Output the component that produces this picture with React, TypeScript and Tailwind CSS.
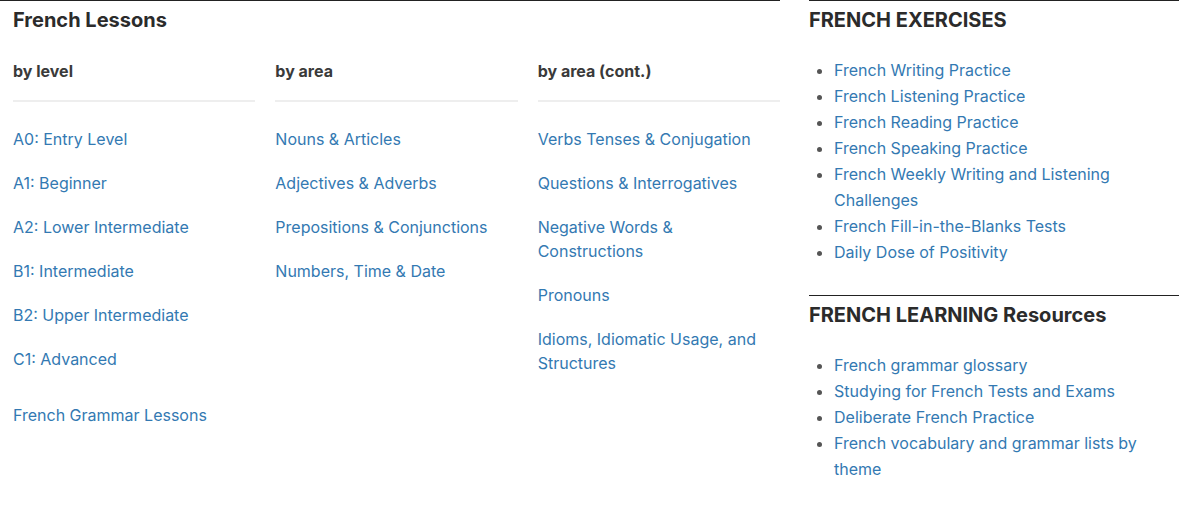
import React from "react";

const levels = [
    "A0: Entry Level",
    "A1: Beginner",
    "A2: Lower Intermediate",
    "B1: Intermediate",
    "B2: Upper Intermediate",
    "C1: Advanced",
];

const areas = [
    "Nouns & Articles",
    "Adjectives & Adverbs",
    "Prepositions & Conjunctions",
    "Numbers, Time & Date",
];

const areasCont = [
    "Verbs Tenses & Conjugation",
    "Questions & Interrogatives",
    "Negative Words & Constructions",
    "Pronouns",
    "Idioms, Idiomatic Usage, and Structures",
];

const exercises = [
    "French Writing Practice",
    "French Listening Practice",
    "French Reading Practice",
    "French Speaking Practice",
    "French Weekly Writing and Listening Challenges",
    "French Fill-in-the-Blanks Tests",
    "Daily Dose of Positivity",
];

const resources = [
    "French grammar glossary",
    "Studying for French Tests and Exams",
    "Deliberate French Practice",
    "French vocabulary and grammar lists by theme",
];

type ColumnProps = {
    title: string;
    links: string[];
    children?: React.ReactNode;
};

function LessonColumn({ title, links, children }: ColumnProps) {
    return (
        <div>
            {/* column heading with light rule under it */}
            <h3 className="text-[16px] leading-[24px] font-bold text-[#3a3a3a] pb-[17px] border-b-2 border-[#eeeeee]">
                {title}
            </h3>
            <ul className="mt-[25px] flex flex-col gap-[20px] w-[225px]">
                {links.map((link) => (
                    <li key={link}>
                        <a href="#" className="text-[#3379b2] text-[16px] leading-[24px]">
                            {link}
                        </a>
                    </li>
                ))}
            </ul>
            {children}
        </div>
    );
}

function LinkSection({ title, links }: { title: string; links: string[] }) {
    return (
        <section className="border-t border-[#222] pt-[8px]">
            <h2 className="text-[20px] leading-[23px] font-bold text-[#2b2b2b]">
                {title}
            </h2>
            <ul className="mt-[25px] pl-[25px] list-disc marker:text-[#555]">
                {links.map((link) => (
                    <li key={link} className="text-[16px] leading-[26px]">
                        <a href="#" className="text-[#3379b2]">
                            {link}
                        </a>
                    </li>
                ))}
            </ul>
        </section>
    );
}

export default function App() {
    return (
        <div
            className="flex gap-[29px] bg-white min-h-[505px]"
            style={{ fontFamily: "Inter, 'Noto Sans', sans-serif" }}
        >
            {/* French Lessons panel */}
            <section className="w-[780px] border-t border-[#222] pt-[8px] pl-[13px]">
                <h2 className="text-[20px] leading-[23px] font-bold text-[#2b2b2b]">
                    French Lessons
                </h2>
                <div className="mt-[27px] grid grid-cols-3 gap-[20px]">
                    <LessonColumn title="by level" links={levels}>
                        <a
                            href="#"
                            className="block mt-[32px] text-[#3379b2] text-[16px] leading-[24px]"
                        >
                            French Grammar Lessons
                        </a>
                    </LessonColumn>
                    <LessonColumn title="by area" links={areas} />
                    <LessonColumn title="by area (cont.)" links={areasCont} />
                </div>
            </section>

            {/* Exercises and resources */}
            <div className="w-[370px] flex flex-col gap-[30px]">
                <LinkSection title="FRENCH EXERCISES" links={exercises} />
                <LinkSection title="FRENCH LEARNING Resources" links={resources} />
            </div>
        </div>
    );
}
